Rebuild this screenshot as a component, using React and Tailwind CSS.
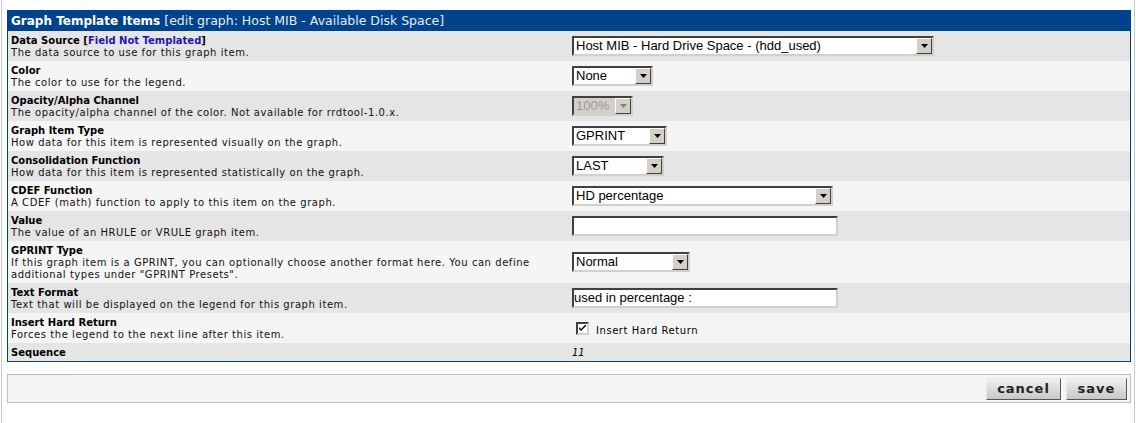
const VERDANA = { fontFamily: '"DejaVu Sans", Verdana, sans-serif' }

function Arrow({ disabled }) {
  return (
    <div className="flex-none w-4 h-4 bg-[#d4d0c8] border border-t-white border-l-white border-r-[#404040] border-b-[#404040] flex items-center justify-center">
      <svg width="7" height="4" viewBox="0 0 7 4">
        <path d="M0 0h7L3.5 4z" fill={disabled ? '#808080' : '#000'} />
      </svg>
    </div>
  )
}

function Select({ value, width, disabled }) {
  return (
    <div
      className={`h-5 flex items-center border-2 border-t-[#404040] border-l-[#404040] border-r-[#d4d0c8] border-b-[#d4d0c8] ${disabled ? 'bg-[#d4d0c8] text-[#9a9a9a]' : 'bg-white text-black'}`}
      style={{ width }}
    >
      <span className="flex-1 pl-[2px] text-[13px] leading-4 font-['Liberation_Sans',Arial,sans-serif] whitespace-nowrap overflow-hidden">{value}</span>
      <Arrow disabled={disabled} />
    </div>
  )
}

function Input({ value }) {
  return (
    <div className="w-[266px] h-5 bg-white border-2 border-t-[#404040] border-l-[#404040] border-r-[#d4d0c8] border-b-[#d4d0c8] flex items-center text-[13px] leading-4 font-['Liberation_Sans',Arial,sans-serif] text-black">
      {value}
    </div>
  )
}

function Row({ label, desc, dark, children }) {
  return (
    <div className={`flex items-center ${dark ? 'bg-[#e5e5e5]' : 'bg-[#f5f5f5]'}`}>
      <div className="w-[564px] flex-none pl-[3px] pt-[4px] pb-[2px] text-[10px] leading-3 text-black">
        <div className="font-bold">{label}</div>
        {desc && <div className="tracking-[0.55px] text-[#111]">{desc}</div>}
      </div>
      <div className="flex-1 flex items-center">{children}</div>
    </div>
  )
}

export default function App() {
  return (
    <div className="h-[423px] bg-white overflow-hidden" style={VERDANA}>
      <div className="ml-px w-[1134px] h-full border-x border-[#c8c8c8] pl-[5px] pt-[10px]">
        <div className="w-[1124px] border border-[#00438c]">
          <div className="h-[20px] bg-[#00438c] flex items-center pl-[3px] text-white">
            <span className="font-bold text-[12px]">Graph Template Items</span>
            <span className="ml-1 text-[12.5px] text-[#e5ecf6]">[edit graph: Host MIB - Available Disk Space]</span>
          </div>

          <Row
            dark
            label={<>Data Source [<span className="text-[#1a1aa6]">Field Not Templated</span>]</>}
            desc="The data source to use for this graph item."
          >
            <Select value="Host MIB - Hard Drive Space - (hdd_used)" width={362} />
          </Row>
          <Row label="Color" desc="The color to use for the legend.">
            <Select value="None" width={81} />
          </Row>
          <Row dark label="Opacity/Alpha Channel" desc="The opacity/alpha channel of the color. Not available for rrdtool-1.0.x.">
            <Select value="100%" width={61} disabled />
          </Row>
          <Row label="Graph Item Type" desc="How data for this item is represented visually on the graph.">
            <Select value="GPRINT" width={95} />
          </Row>
          <Row dark label="Consolidation Function" desc="How data for this item is represented statistically on the graph.">
            <Select value="LAST" width={92} />
          </Row>
          <Row label="CDEF Function" desc="A CDEF (math) function to apply to this item on the graph.">
            <Select value="HD percentage" width={261} />
          </Row>
          <Row dark label="Value" desc="The value of an HRULE or VRULE graph item.">
            <Input value="" />
          </Row>
          <Row
            label="GPRINT Type"
            desc={<>If this graph item is a GPRINT, you can optionally choose another format here. You can define<br />additional types under "GPRINT Presets".</>}
          >
            <Select value="Normal" width={118} />
          </Row>
          <Row dark label="Text Format" desc="Text that will be displayed on the legend for this graph item.">
            <Input value="used in percentage :" />
          </Row>
          <Row label="Insert Hard Return" desc="Forces the legend to the next line after this item.">
            <div className="flex items-center pl-1">
              <div className="w-[13px] h-[13px] bg-white border-2 border-t-[#404040] border-l-[#404040] border-r-[#d4d0c8] border-b-[#d4d0c8] flex items-center justify-center">
                <svg width="7" height="7" viewBox="0 0 7 7">
                  <path d="M0 2v2l2 2 5-5V-1L2 4z" fill="#000" />
                </svg>
              </div>
              <span className="ml-[7px] mt-[5px] text-[10px] tracking-[0.55px] text-black">Insert Hard Return</span>
            </div>
          </Row>
          <Row dark label="Sequence">
            <span className="text-[10px] italic text-black">11</span>
          </Row>
        </div>

        <div className="mt-3 w-[1124px] h-[29px] border border-[#c0c0c0] bg-[#f5f5f5] flex items-center justify-end gap-[5px] pr-[3px]">
          <button className="w-[75px] h-[22px] bg-gradient-to-b from-[#f0f0f0] to-[#c8c8c8] border border-t-[#e8e8e8] border-l-[#e8e8e8] border-r-[#555] border-b-[#555] text-[13px] font-bold tracking-[1px] text-[#222]">
            cancel
          </button>
          <button className="w-[61px] h-[22px] bg-gradient-to-b from-[#f0f0f0] to-[#c8c8c8] border border-t-[#e8e8e8] border-l-[#e8e8e8] border-r-[#555] border-b-[#555] text-[13px] font-bold tracking-[1px] text-[#222]">
            save
          </button>
        </div>
      </div>
    </div>
  )
}
